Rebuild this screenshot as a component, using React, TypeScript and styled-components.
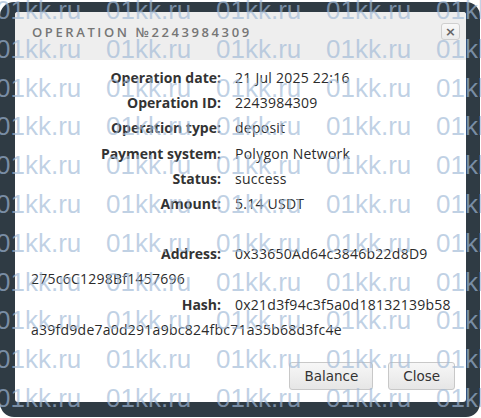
import React from 'react';
import styled, { createGlobalStyle } from 'styled-components';

const GlobalStyle = createGlobalStyle`
  html, body {
    margin: 0;
    padding: 0;
    background: #ffffff;
  }
  * { box-sizing: border-box; }
`;

const Page = styled.div`
  position: relative;
  width: 481px;
  height: 418px;
  padding-top: 2px;
  overflow: hidden;
  background: #ffffff;
`;

const Frame = styled.div`
  width: 480px;
  height: 415px;
  background: #2f3b44;
  border-radius: 14px;
  padding: 10px 14px 15px 15px;
  display: flex;
  flex-direction: column;
`;

const Dialog = styled.div`
  flex: 1;
  display: flex;
  flex-direction: column;
  background: #ffffff;
  border-radius: 3px;
  overflow: hidden;
`;

const TitleBar = styled.div`
  height: 48px;
  flex: none;
  display: flex;
  justify-content: space-between;
  align-items: flex-start;
  padding: 12px 6px 0 17px;
  background: #eeeeee;
`;

const Title = styled.h1`
  margin: 0;
  font-family: 'Open Sans', 'Liberation Sans', sans-serif;
  font-size: 13px;
  font-weight: 600;
  line-height: 16px;
  letter-spacing: 2.6px;
  text-transform: uppercase;
  color: #767676;
`;

const CloseX = styled.button`
  width: 19px;
  height: 17px;
  margin-top: -1px;
  padding: 0;
  display: flex;
  align-items: center;
  justify-content: center;
  border: 1px solid #cfcfcf;
  border-radius: 3px;
  background: linear-gradient(#f8f8f8, #ebebeb);
  color: #666666;
  font-family: 'DejaVu Sans', sans-serif;
  font-size: 13px;
  font-weight: bold;
  line-height: 1;
`;

const Body = styled.div`
  flex: 1;
  padding: 5px 12px 0 16px;
  font-family: 'Open Sans', 'Liberation Sans', sans-serif;
  font-size: 14px;
  line-height: 25.2px;
  color: #333333;
`;

const Row = styled.div<{ $gap?: boolean }>`
  margin-top: ${p => (p.$gap ? '25px' : '0')};
`;

const Label = styled.span`
  display: inline-block;
  width: 190px;
  margin-right: 14px;
  text-align: right;
  font-weight: 700;
  color: #333333;
`;

const Value = styled.span`
  color: #2b2b2b;
  letter-spacing: 0.25px;
`;

const Footer = styled.div`
  flex: none;
  display: flex;
  justify-content: flex-end;
  gap: 15px;
  padding: 0 11px 12px 0;
`;

const Button = styled.button`
  height: 28px;
  padding: 0 14px;
  border: 1px solid #c8c8c8;
  border-radius: 3px;
  background: linear-gradient(#f7f7f7, #e6e6e6);
  font-family: 'DejaVu Sans', 'Liberation Sans', sans-serif;
  font-size: 13.5px;
  color: #333333;
`;

const Watermark = styled.div`
  position: absolute;
  inset: 0;
  pointer-events: none;
  overflow: hidden;
  display: flex;
  flex-direction: column;
  margin-top: -9px;
`;

const MarkRow = styled.div`
  display: flex;
  height: 45px;
  align-items: center;
  margin-left: -4px;
`;

const Mark = styled.span`
  flex: none;
  width: 110px;
  font-family: 'Liberation Sans', Arial, sans-serif;
  font-size: 26px;
  color: rgba(160, 185, 215, 0.66);
  white-space: nowrap;
`;

// long values are shown split where the original dialog wraps them
const rows: { label: string; value: string[]; gap?: boolean }[] = [
  { label: 'Operation date:', value: ['21 Jul 2025 22:16'] },
  { label: 'Operation ID:', value: ['2243984309'] },
  { label: 'Operation type:', value: ['deposit'] },
  { label: 'Payment system:', value: ['Polygon Network'] },
  { label: 'Status:', value: ['success'] },
  { label: 'Amount:', value: ['5.14 USDT'] },
  { label: 'Address:', value: ['0x33650Ad64c3846b22d8D9', '275c6C1298Bf1457696'], gap: true },
  { label: 'Hash:', value: ['0x21d3f94c3f5a0d18132139b58', 'a39fd9de7a0d291a9bc824fbc71a35b68d3fc4e'] },
];

export default function App() {
  return (
    <Page>
      <GlobalStyle />
      <Frame>
        <Dialog>
          <TitleBar>
            <Title>Operation №2243984309</Title>
            <CloseX aria-label="close">×</CloseX>
          </TitleBar>
          <Body>
            {rows.map(r => (
              <Row key={r.label} $gap={r.gap}>
                <Label>{r.label}</Label>
                <Value>
                  {r.value.map((part, i) => (
                    <React.Fragment key={i}>
                      {i > 0 && <br />}
                      {part}
                    </React.Fragment>
                  ))}
                </Value>
              </Row>
            ))}
          </Body>
          <Footer>
            <Button>Balance</Button>
            <Button>Close</Button>
          </Footer>
        </Dialog>
      </Frame>
      <Watermark>
        {Array.from({ length: 11 }).map((_, i) => (
          <MarkRow key={i}>
            {Array.from({ length: 5 }).map((__, j) => (
              <Mark key={j}>01kk.ru</Mark>
            ))}
          </MarkRow>
        ))}
      </Watermark>
    </Page>
  );
}
